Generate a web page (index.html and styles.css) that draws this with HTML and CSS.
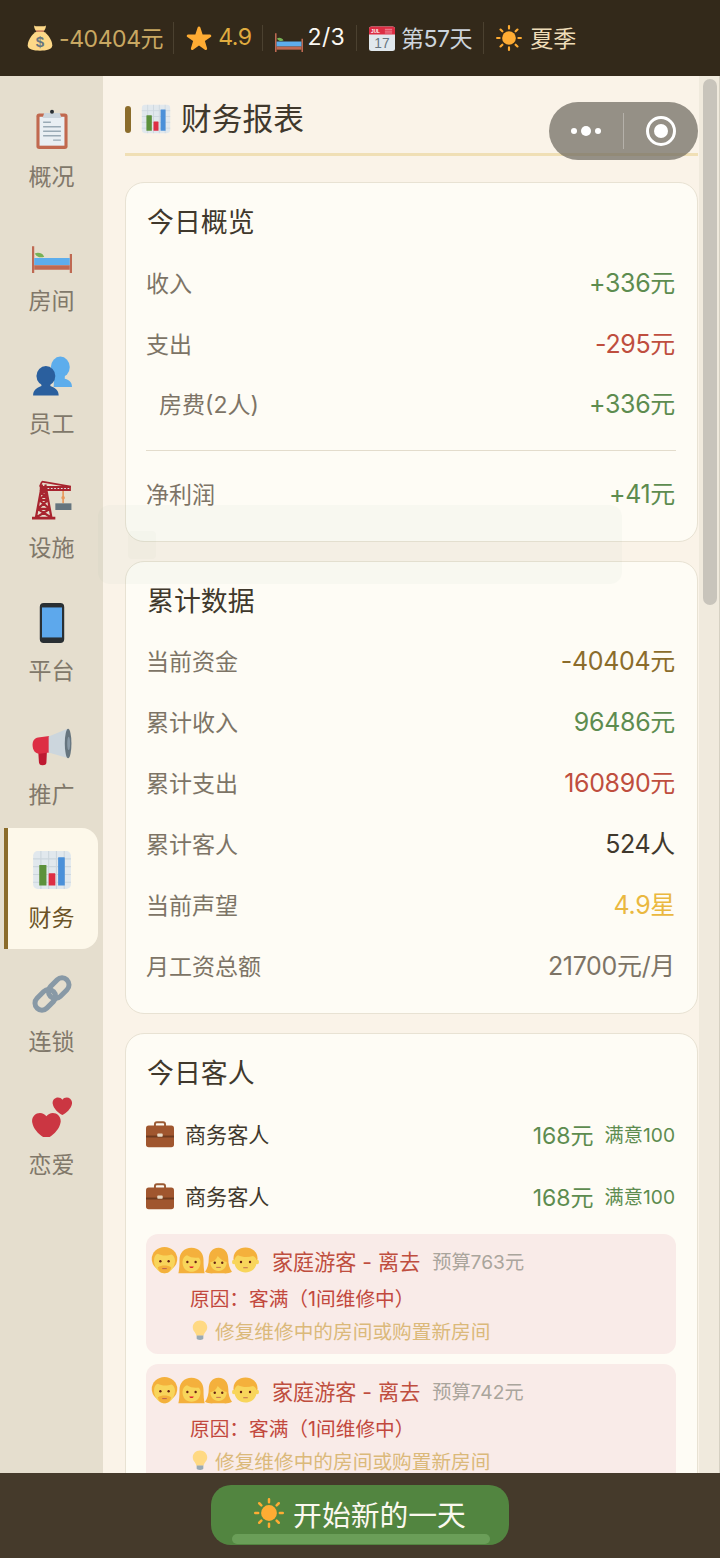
FILE: index.html
```html
<!DOCTYPE html>
<html lang="zh-CN">
<head>
<meta charset="utf-8">
<title>财务报表</title>
<link rel="stylesheet" href="styles.css">
</head>
<body>
<svg class="defs" width="0" height="0" aria-hidden="true">
  <defs>
    <symbol id="i-bag" viewBox="0 0 36 36">
      <path fill="#FDD888" d="M18 8C27 8 35 21 35 28c0 6-8 7.500-17 7.500S1 34 1 28C1 21 9 8 18 8z"/>
      <path fill="#FDD888" d="M10 .8c2.500 1.700 5 .9 8 .9s5.500.8 8-.9c.8 3-1.500 6-3 8.200H13C11.500 6.800 9.200 3.800 10 .8z"/>
      <path fill="#BF6952" d="M12.500 7.500h11v1.800h-11z"/>
      <text class="svg-dollar" x="18" y="30" text-anchor="middle">$</text>
    </symbol>
    <symbol id="i-star" viewBox="0 0 36 36">
      <path fill="#FFAC33" d="M27.287 34.627c-.404 0-.806-.124-1.152-.371L18 28.422l-8.135 5.834c-.693.496-1.623.496-2.312-.008-.689-.499-.979-1.385-.721-2.194l3.034-9.792-8.062-5.681c-.685-.505-.97-1.393-.708-2.203.264-.808 1.016-1.357 1.866-1.363L12.947 13l3.179-9.549c.268-.809 1.023-1.353 1.874-1.353.851 0 1.606.545 1.875 1.353L23 13l10.036.015c.853.006 1.606.556 1.867 1.363.263.81-.022 1.698-.708 2.203l-8.062 5.681 3.034 9.792c.26.809-.033 1.695-.72 2.194-.347.254-.753.379-1.16.379z"/>
    </symbol>
    <symbol id="i-bed" viewBox="0 0 36 36">
      <path fill="#BF6952" d="M0 12h2v24H0zM34 19h2v17h-2z"/>
      <path fill="#5DADEC" d="M2 22.500h32V29H2z"/>
      <path fill="#BF6952" d="M2 29h32v4H2z"/>
      <path fill="#77B255" d="M2.500 18.500c3-1.500 7-.5 8.500 2.800-3 1.200-6.500.8-8.500-2.800z"/>
    </symbol>
    <symbol id="i-cal" viewBox="0 0 36 36">
      <rect fill="#E1E8ED" x="0" y="2" width="36" height="34" rx="3.500"/>
      <path fill="#DD2E44" d="M3.500 2h29A3.500 3.500 0 0 1 36 5.500V13H0V5.500A3.500 3.500 0 0 1 3.500 2z"/>
      <text class="svg-jul" x="9" y="11" text-anchor="middle">JUL</text>
      <path stroke="#F4ABBA" stroke-width="1" d="M22 6h10M22 8.500h10M22 11h10"/>
      <text class="svg-day" x="18" y="32" text-anchor="middle">17</text>
    </symbol>
    <symbol id="i-sun" viewBox="0 0 36 36">
      <circle fill="#FFAC33" cx="18" cy="18" r="9.500"/>
      <path stroke="#FFAC33" stroke-width="3" stroke-linecap="round" d="M18 1.500v3.500M18 31v3.500M1.500 18H5M31 18h3.500M6.300 6.300l2.500 2.500M27.200 27.200l2.500 2.500M6.300 29.700l2.500-2.500M27.200 8.800l2.500-2.500"/>
    </symbol>
    <symbol id="i-clip" viewBox="0 0 36 36">
      <rect fill="#C1694F" x="4" y="4" width="28" height="32" rx="2.500"/>
      <rect fill="#E9EFF3" x="6.800" y="7" width="22.400" height="26"/>
      <path fill="#CCD6DD" d="M11 3.500h14l1.500 4.500h-17z"/>
      <circle fill="#292F33" cx="18" cy="2.500" r="1.800"/>
      <path stroke="#99AAB5" stroke-width="1.300" d="M10 12h7M10 16h16M10 20h16M10 24h16M19 28h7"/>
    </symbol>
    <symbol id="i-chart" viewBox="0 0 36 36">
      <rect fill="#E1E8ED" x="1" y="1" width="34" height="34" rx="4"/>
      <path stroke="#CCD6DD" stroke-width="1" d="M8 1v34M15 1v34M22 1v34M29 1v34M1 8h34M1 15h34M1 22h34M1 29h34"/>
      <path fill="#5C913B" d="M7 13.500h5.500a.5.500 0 0 1 .5.500v18H6.500V14a.5.500 0 0 1 .5-.5z"/>
      <path fill="#DD2E44" d="M15.500 21h5a.5.500 0 0 1 .5.500V32h-6V21.500a.5.500 0 0 1 .5-.5z"/>
      <path fill="#4A90D9" d="M24 6.500h5a.5.500 0 0 1 .5.500v25H23.500V7a.5.500 0 0 1 .5-.5z"/>
    </symbol>
    <symbol id="i-people" viewBox="0 0 36 36">
      <ellipse fill="#5DADEC" cx="25.500" cy="10" rx="8.500" ry="9.500"/>
      <path fill="#5DADEC" d="M20 16l-.5 12H36c0-4-2-6.500-6.500-7.500V16z"/>
      <ellipse fill="#2A5F9E" cx="12.500" cy="18" rx="8.500" ry="9"/>
      <path fill="#2A5F9E" d="M8.500 24v3C4 28.500 1 31 1 35.500h23c0-4.500-3-7-7.500-8.500v-3z"/>
    </symbol>
    <symbol id="i-crane" viewBox="0 0 36 36">
      <path fill="none" stroke="#A8242F" stroke-width="2" d="M9 4L3.500 34M12 4l5.500 30M5 26l11 0M6.500 18h8.500M8 11h6M5 26l9.500-8M16 26L6.500 18M6.500 18L14 11M14.500 18L8 11M3.500 34L16 26M17.500 34L5 26"/>
      <path fill="#A8242F" d="M0 33h21v2.500H0zM7 5.500h28v4.500H7z"/>
      <path fill="none" stroke="#A8242F" stroke-width="1.500" d="M9 1.500L35 6M9 1.500L7 6"/>
      <path stroke="#E1E8ED" stroke-width="1" stroke-dasharray="1.500 1.500" d="M14 7.700h20"/>
      <path stroke="#E8975A" stroke-width="1.500" d="M28 10v11"/>
      <circle fill="#E8975A" cx="28" cy="16" r="1.600"/>
      <path fill="#66757F" d="M21 21h14.500v6H21z"/>
    </symbol>
    <symbol id="i-phone" viewBox="0 0 36 36">
      <rect fill="#292F33" x="7" y="0" width="22" height="36" rx="3.500"/>
      <rect fill="#5DA8EC" x="9" y="4" width="18" height="27"/>
    </symbol>
    <symbol id="i-mega" viewBox="0 0 36 36">
      <path fill="#BE1931" d="M5.500 20h8l-.5 11.500c0 2-1 3-3.500 3S6.200 33 6.200 31z"/>
      <path fill="#DD2E44" d="M.5 16c0-3.500 2-6 5-6.500l10-1.500v15l-9 1c-3.500 0-6-3-6-8z"/>
      <path fill="#CCD6DD" d="M15 8.500L32 1.500V28l-17-5z"/>
      <ellipse fill="#66757F" cx="32.500" cy="14.800" rx="3" ry="13.300"/>
      <ellipse fill="#8899A6" cx="33" cy="14.800" rx="1.300" ry="6"/>
    </symbol>
    <symbol id="i-link" viewBox="0 0 36 36">
      <g fill="none" stroke="#8899A6" stroke-width="4.500">
        <rect x="1.500" y="17" width="21" height="12.500" rx="6.200" transform="rotate(-45 12 23.300)"/>
        <rect x="13.500" y="6.500" width="21" height="12.500" rx="6.200" transform="rotate(-45 24 12.700)"/>
      </g>
    </symbol>
    <symbol id="i-hearts" viewBox="0 0 36 36">
      <path fill="#CB3642" transform="translate(0 13) scale(.72)" d="M35.885 11.833c0-5.450-4.418-9.868-9.867-9.868-3.308 0-6.227 1.633-8.018 4.129-1.791-2.496-4.710-4.129-8.017-4.129-5.450 0-9.868 4.417-9.868 9.868 0 .772.098 1.520.266 2.241C1.751 22.587 11.216 31.568 18 34.034c6.783-2.466 16.249-11.447 17.617-19.959.17-.721.268-1.469.268-2.242z"/>
      <path fill="#CB3642" transform="translate(18.500 -.5) scale(.49)" d="M35.885 11.833c0-5.450-4.418-9.868-9.867-9.868-3.308 0-6.227 1.633-8.018 4.129-1.791-2.496-4.710-4.129-8.017-4.129-5.450 0-9.868 4.417-9.868 9.868 0 .772.098 1.520.266 2.241C1.751 22.587 11.216 31.568 18 34.034c6.783-2.466 16.249-11.447 17.617-19.959.17-.721.268-1.469.268-2.242z"/>
    </symbol>
    <symbol id="i-case" viewBox="0 0 36 36">
      <path fill="none" stroke="#9B5A33" stroke-width="2.500" d="M11.500 8V5.500c0-1.500 1-2.500 2.500-2.500h8c1.500 0 2.500 1 2.500 2.500V8"/>
      <rect fill="#A0562E" x="0" y="7" width="36" height="28" rx="3.500"/>
      <path fill="#6E3A1E" d="M0 20h36v2.500H0z"/>
      <rect fill="#E8D9C4" x="14.500" y="17.500" width="7" height="4" rx="1"/>
    </symbol>
    <symbol id="i-bulb" viewBox="0 0 36 36">
      <path fill="#FFD983" d="M18 1C10 1 5 7 5 13.500c0 7 6 9 6.500 15h13c.5-6 6.500-8 6.500-15C31 7 26 1 18 1z"/>
      <path fill="#99AAB5" d="M12 28h12v5.500c0 1.500-2.500 2.500-6 2.500s-6-1-6-2.500z"/>
    </symbol>
    <symbol id="i-man" viewBox="0 0 36 36">
      <ellipse fill="#F4B03C" cx="18" cy="16" rx="17" ry="16"/>
      <path fill="#F8D55B" d="M4 18c0-5 2-8 5-9 5 3 13 3 18 1 3 1 5 4 5 8 0 9-6 17-14 17S4 27 4 18z"/>
      <path fill="#F4B03C" d="M9 27c5-3 13-3 18 0-1 5-4 8-9 8s-8-3-9-8z"/>
      <circle fill="#662113" cx="12.500" cy="19" r="1.600"/><circle fill="#662113" cx="23.500" cy="19" r="1.600"/>
      <path fill="#C1694F" d="M15 28h6v1.500h-6z"/>
    </symbol>
    <symbol id="i-woman" viewBox="0 0 36 36">
      <path fill="#F4B03C" d="M18 1C8 1 2 8 2 17c0 8-.5 14-1.500 18h35c-1-4-1.500-10-1.500-18C34 8 28 1 18 1z"/>
      <path fill="#F8D55B" d="M6 20c0-5 3-8 6-9 4 3 11 4 15 3 2 1 3 3 3 6 0 8-5 13-12 13S6 28 6 20z"/>
      <circle fill="#662113" cx="12.500" cy="20" r="1.600"/><circle fill="#662113" cx="23.500" cy="20" r="1.600"/>
      <path fill="#DF1F32" d="M15 26h6c-.5 1.500-1.500 2-3 2s-2.500-.5-3-2z"/>
    </symbol>
    <symbol id="i-girl" viewBox="0 0 36 36">
      <path fill="#F4B03C" d="M18 1C9 1 5 8 5 16c0 7-2 13-5 17 3 2 8 2.500 12 2h12c4 .5 9 0 12-2-3-4-5-10-5-17 0-8-4-15-13-15z"/>
      <path fill="#F8D55B" d="M7 20c4 0 8-3 10-8 3 4 7 7 12 8 0 7-5 12-11 12S7 27 7 20z"/>
      <circle fill="#662113" cx="13" cy="21" r="1.600"/><circle fill="#662113" cx="23" cy="21" r="1.600"/>
      <path fill="#C1694F" d="M15 26.500h6v1.300h-6z"/>
    </symbol>
    <symbol id="i-boy" viewBox="0 0 36 36">
      <ellipse fill="#F4B03C" cx="18" cy="15" rx="16" ry="14.500"/>
      <ellipse fill="#F8D55B" cx="2.500" cy="20" rx="2.500" ry="3"/><ellipse fill="#F8D55B" cx="33.500" cy="20" rx="2.500" ry="3"/>
      <path fill="#F8D55B" d="M3 19c0-3 2-7 5-8 6 3 14 3 20 1 3 1 5 4 5 7 0 9-7 15-15 15S3 28 3 19z"/>
      <circle fill="#662113" cx="12" cy="20" r="1.600"/><circle fill="#662113" cx="24" cy="20" r="1.600"/>
      <path fill="#C1694F" d="M15 27h6v1.300h-6z"/>
    </symbol>
  </defs>
</svg>

<div class="app">
  <header class="topbar">
    <div class="stat stat-tight"><svg class="stat-icon"><use href="#i-bag"/></svg><span class="c-money">-40404元</span></div>
    <div class="stat stat-tight"><svg class="stat-icon"><use href="#i-star"/></svg><span class="c-star">4.9</span></div>
    <div class="stat stat-bed"><svg class="stat-icon"><use href="#i-bed"/></svg><span class="c-room">2/3</span></div>
    <div class="stat"><svg class="stat-icon"><use href="#i-cal"/></svg><span class="c-day">第57天</span></div>
    <div class="stat stat-last"><svg class="stat-icon"><use href="#i-sun"/></svg><span class="c-season">夏季</span></div>
  </header>

  <div class="body">
    <nav class="sidebar">
      <div class="nav-item"><svg class="nav-icon"><use href="#i-clip"/></svg><span>概况</span></div>
      <div class="nav-item"><svg class="nav-icon"><use href="#i-bed"/></svg><span>房间</span></div>
      <div class="nav-item"><svg class="nav-icon"><use href="#i-people"/></svg><span>员工</span></div>
      <div class="nav-item"><svg class="nav-icon"><use href="#i-crane"/></svg><span>设施</span></div>
      <div class="nav-item"><svg class="nav-icon"><use href="#i-phone"/></svg><span>平台</span></div>
      <div class="nav-item"><svg class="nav-icon"><use href="#i-mega"/></svg><span>推广</span></div>
      <div class="nav-item active"><svg class="nav-icon"><use href="#i-chart"/></svg><span>财务</span></div>
      <div class="nav-item"><svg class="nav-icon"><use href="#i-link"/></svg><span>连锁</span></div>
      <div class="nav-item"><svg class="nav-icon"><use href="#i-hearts"/></svg><span>恋爱</span></div>
    </nav>

    <main class="content">
      <div class="page-title">
        <i class="title-bar"></i>
        <svg class="title-icon"><use href="#i-chart"/></svg>
        <h1>财务报表</h1>
      </div>

      <section class="card">
        <h2>今日概览</h2>
        <div class="row"><span class="label">收入</span><span class="green">+336元</span></div>
        <div class="row"><span class="label">支出</span><span class="red">-295元</span></div>
        <div class="row row-sub"><span class="label">房费(2人)</span><span class="green">+336元</span></div>
        <hr class="divider">
        <div class="row"><span class="label">净利润</span><span class="green">+41元</span></div>
      </section>

      <section class="card card-stats">
        <h2>累计数据</h2>
        <div class="row"><span class="label">当前资金</span><span class="brown">-40404元</span></div>
        <div class="row"><span class="label">累计收入</span><span class="green">96486元</span></div>
        <div class="row"><span class="label">累计支出</span><span class="red">160890元</span></div>
        <div class="row"><span class="label">累计客人</span><span class="dark">524人</span></div>
        <div class="row"><span class="label">当前声望</span><span class="gold">4.9星</span></div>
        <div class="row"><span class="label">月工资总额</span><span class="muted">21700元/月</span></div>
      </section>

      <section class="card card-guests">
        <h2>今日客人</h2>
        <div class="guest">
          <svg class="guest-icon"><use href="#i-case"/></svg>
          <span class="guest-name">商务客人</span>
          <span class="guest-pay">168元</span>
          <span class="guest-sat">满意100</span>
        </div>
        <div class="guest">
          <svg class="guest-icon"><use href="#i-case"/></svg>
          <span class="guest-name">商务客人</span>
          <span class="guest-pay">168元</span>
          <span class="guest-sat">满意100</span>
        </div>
        <div class="left-box">
          <div class="left-head">
            <span class="faces"><svg><use href="#i-man"/></svg><svg><use href="#i-woman"/></svg><svg><use href="#i-girl"/></svg><svg><use href="#i-boy"/></svg></span>
            <span class="left-name">家庭游客 - 离去</span>
            <span class="left-budget">预算763元</span>
          </div>
          <div class="left-reason">原因：客满（1间维修中）</div>
          <div class="left-tip"><svg><use href="#i-bulb"/></svg><span>修复维修中的房间或购置新房间</span></div>
        </div>
        <div class="left-box">
          <div class="left-head">
            <span class="faces"><svg><use href="#i-man"/></svg><svg><use href="#i-woman"/></svg><svg><use href="#i-girl"/></svg><svg><use href="#i-boy"/></svg></span>
            <span class="left-name">家庭游客 - 离去</span>
            <span class="left-budget">预算742元</span>
          </div>
          <div class="left-reason">原因：客满（1间维修中）</div>
          <div class="left-tip"><svg><use href="#i-bulb"/></svg><span>修复维修中的房间或购置新房间</span></div>
        </div>
      </section>
    </main>
  </div>

  <footer class="footer">
    <button class="start-btn" type="button">
      <svg class="start-icon"><use href="#i-sun"/></svg>
      <span>开始新的一天</span>
      <i class="start-shine"></i>
    </button>
  </footer>

  <div class="toast"><i class="toast-icon"></i></div>
  <div class="scroll-track"></div>
  <div class="scrollbar"></div>
  <div class="capsule">
    <span class="cap-dots"><i></i><i class="big"></i><i></i></span>
    <span class="cap-line"></span>
    <span class="cap-target"><i></i></span>
  </div>
</div>
</body>
</html>
```

FILE: styles.css
```css
* { box-sizing: border-box; }
html, body { margin: 0; padding: 0; }
body {
  width: 720px;
  height: 1558px;
  overflow: hidden;
  font-family: Inter, "Noto Sans CJK SC", sans-serif;
  font-weight: 400;
  background: #faf3e8;
}
.defs { position: absolute; }
.svg-dollar { font: 600 21px "Liberation Sans", sans-serif; fill: #67757F; }
.svg-jul { font: 700 6.500px "Liberation Sans", sans-serif; fill: #fff; }
.svg-day { font: 400 19px "Liberation Sans", sans-serif; fill: #66757F; }

.app { position: relative; display: flex; flex-direction: column; width: 720px; height: 1558px; overflow: hidden; }

/* top status bar */
.topbar {
  flex: none;
  height: 76px;
  display: flex;
  align-items: center;
  padding-left: 27px;
  background: #33291a;
  font-size: 23.040px;
}
.stat {
  display: flex;
  align-items: center;
  gap: 6px;
  padding-right: 12px;
  margin-right: 12px;
  position: relative;
}
.stat-tight { padding-right: 11px; }
.stat span { padding-bottom: 2px; }
.stat::after {
  content: "";
  position: absolute;
  right: 0;
  top: 2px;
  bottom: 2px;
  width: 1px;
  background: #4b4130;
}
.stat-last { gap: 8px; }
.stat-last::after { display: none; }
.stat-icon { width: 26px; height: 26px; flex: none; }
.stat-bed { gap: 5px; }
.stat-bed .stat-icon { width: 28px; height: 28px; }
.c-money { color: #c9a862; letter-spacing: -.45px; }
.c-star { color: #e0ac3f; letter-spacing: -.5px; }
.c-room { color: #fbf8f2; letter-spacing: .3px; }
.c-day { color: #ccd3dc; letter-spacing: -.5px; }
.c-season { color: #eedcb8; }

.body { flex: 1; min-height: 0; display: flex; }

/* sidebar */
.sidebar {
  flex: none;
  width: 103px;
  padding: 11px 5px 0 4px;
  display: flex;
  flex-direction: column;
  gap: 2.500px;
  background: #e5dece;
}
.nav-item {
  flex: none;
  height: 121px;
  display: flex;
  flex-direction: column;
  align-items: center;
  padding: 22px 3px 0 0;
  color: #81786a;
  font-size: 23.040px;
  line-height: 30px;
  border-radius: 0 16px 16px 0;
  border-left: 4px solid transparent;
}
.nav-icon { width: 40px; height: 40px; margin-bottom: 13px; }
.nav-item.active {
  background: #fdf8ea;
  border-left-color: #8b6c2b;
  color: #6b5326;
}

/* content */
.content {
  flex: 1;
  min-width: 0;
  padding: 0 22px;
  overflow: hidden;
}
.page-title {
  height: 80px;
  margin-bottom: 26px;
  display: flex;
  align-items: center;
  padding: 14px 0 4.500px;
  border-bottom: 3px solid #f0dfb5;
}
.title-bar { width: 6px; height: 27px; border-radius: 3px; background: #8b6c2b; margin-right: 10px; }
.title-icon { width: 30px; height: 30px; margin-right: 10px; }
h1 { margin: 0; font-size: 30.720px; font-weight: 400; color: #40382c; line-height: 38px; }

.card {
  background: #fefcf5;
  border: 1px solid #e8e2d3;
  border-radius: 19px;
  padding: 20px 21px 18px 20px;
  margin-bottom: 19px;
}
h2 { margin: 0 0 10px 1px; font-size: 26.880px; font-weight: 400; line-height: 38px; color: #40382c; }
.card-stats h2 { margin-bottom: 9px; }
.card-guests h2 { margin-bottom: 11px; }

.row {
  height: 61px;
  padding-right: 1px;
  display: flex;
  align-items: center;
  justify-content: space-between;
  font-size: 24.960px;
}
.row > span:last-child { letter-spacing: -.3px; padding-bottom: 2px; }
.row-sub { padding-left: 13px; height: 60.500px; }
.label { font-size: 23.040px; color: #7d7466; }
.green { color: #5d8c4f; }
.red { color: #bf4e3e; }
.brown { color: #8b6c2b; }
.dark { color: #40382c; }
.gold { color: #eab83f; }
.muted { color: #7d7466; }
.divider { height: 1px; border: 0; margin: 16px 0 11.500px; background: #e3dccc; }

.guest {
  height: 62px;
  padding-right: 1px;
  display: flex;
  align-items: center;
}
.guest-icon { width: 28px; height: 28px; margin-right: 11px; }
.guest-name { flex: 1; font-size: 21.120px; color: #40382c; }
.guest-pay { font-size: 23.040px; color: #5d8c4f; margin-right: 11px; }
.guest-sat { font-size: 19.200px; color: #5d8c4f; }

.left-box {
  height: 120px;
  margin-bottom: 10px;
  padding: 9px 5px 0 5px;
  border-radius: 12px;
  background: #f9ebe8;
}
.guest + .left-box { margin-top: 7px; }
.left-head { display: flex; align-items: center; height: 35px; }
.faces { display: flex; margin-right: 13px; }
.faces svg { width: 27px; height: 27px; flex: none; }
.left-name { font-size: 21.120px; color: #bf4e3e; margin-right: 12px; }
.left-budget { font-size: 19.200px; color: #aaa59c; }
.left-reason { padding-left: 39px; height: 41px; line-height: 43px; font-size: 19.680px; color: #c2483d; }
.left-tip { display: flex; align-items: center; padding-left: 39px; height: 22px; font-size: 19.680px; color: #dbb97a; }
.left-tip svg { width: 20px; height: 20px; margin-right: 5px; flex: none; }

/* overlays */
.toast {
  position: absolute;
  left: 98px;
  top: 505px;
  width: 524px;
  height: 79px;
  border-radius: 12px;
  background: rgba(120, 170, 130, .045);
}
.toast-icon {
  position: absolute;
  left: 30px;
  top: 26px;
  width: 28px;
  height: 28px;
  border-radius: 4px;
  background: rgba(120, 170, 130, .03);
}
.scroll-track {
  position: absolute;
  left: 699px;
  top: 76px;
  bottom: 85px;
  width: 21px;
  background: rgba(190, 185, 165, .16);
  border-right: 1px solid #d6d1c3;
}
.scrollbar {
  position: absolute;
  left: 703px;
  top: 79px;
  width: 14px;
  height: 526px;
  border-radius: 7px;
  background: #c8c4bb;
}
.capsule {
  position: absolute;
  left: 549px;
  top: 102px;
  width: 149px;
  height: 58px;
  border-radius: 29px;
  display: flex;
  align-items: center;
  background: rgba(110, 106, 95, .72);
}
.cap-dots { width: 74px; display: flex; justify-content: center; align-items: center; gap: 4px; }
.cap-dots i { width: 6px; height: 6px; border-radius: 50%; background: #fff; }
.cap-dots i.big { width: 10px; height: 10px; }
.cap-line { width: 1px; height: 36px; background: rgba(255, 255, 255, .3); }
.cap-target {
  width: 30px;
  height: 30px;
  margin-left: 22px;
  border: 3px solid #fff;
  border-radius: 50%;
  display: flex;
  align-items: center;
  justify-content: center;
}
.cap-target i { width: 14px; height: 14px; border-radius: 50%; background: #fff; }

/* footer */
.footer {
  flex: none;
  height: 85px;
  padding-top: 12px;
  display: flex;
  justify-content: center;
  background: #453a2b;
}
.start-btn {
  position: relative;
  width: 298px;
  height: 60px;
  border: 0;
  padding: 0 0 4px;
  border-radius: 20px;
  background: #528540;
  color: #fbf8ef;
  font: inherit;
  font-size: 28.800px;
  display: flex;
  align-items: center;
  justify-content: center;
  gap: 9px;
}
.start-icon { width: 30px; height: 30px; }
.start-shine {
  position: absolute;
  left: 21px;
  right: 19px;
  bottom: 1px;
  height: 10px;
  border-radius: 5px;
  background: #6a9e58;
}
```
